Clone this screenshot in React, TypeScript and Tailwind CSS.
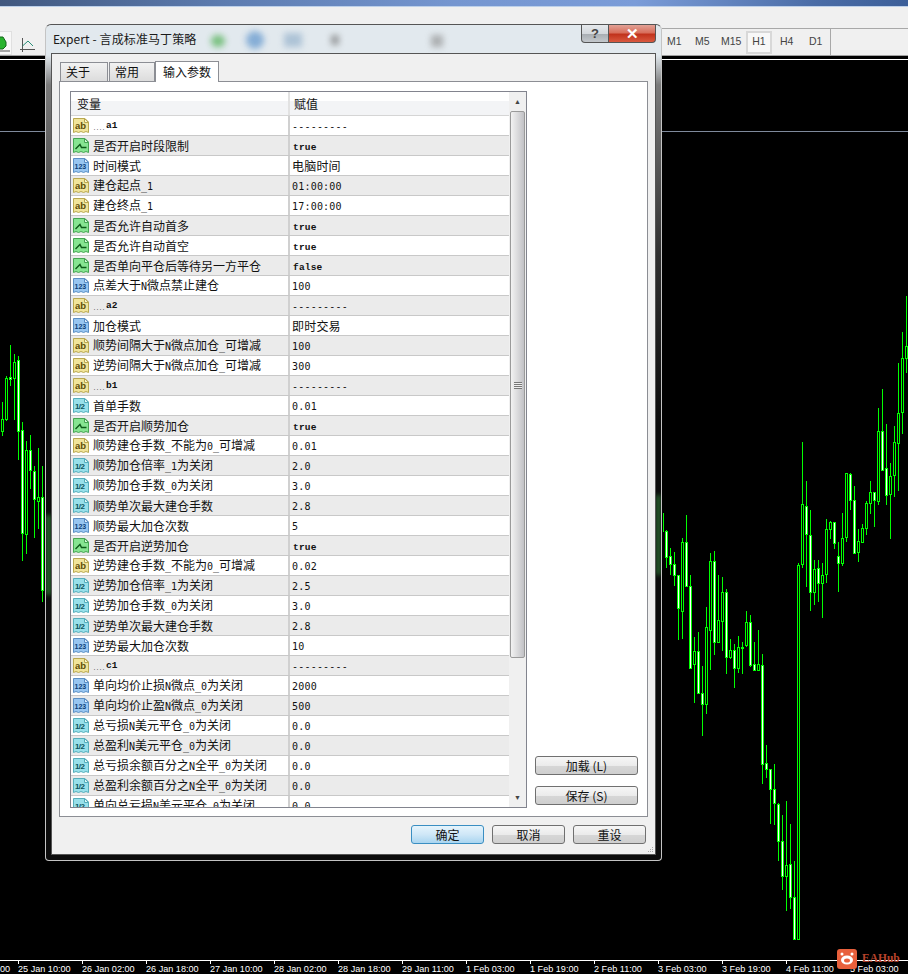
const cjk = { fontFamily: '"Noto Sans CJK SC", sans-serif' };
const mono = { fontFamily: '"DejaVu Sans Mono", monospace' };
const slab = { fontFamily: '"Liberation Mono", monospace' };
const tahoma = { fontFamily: '"Liberation Sans", sans-serif' };

type Kind = 'ab' | 'bool' | 'int' | 'half';

// [label, value, icon]
const rows: [string, string, Kind][] = [
  ['....a1', '---------', 'ab'],
  ['是否开启时段限制', 'true', 'bool'],
  ['时间模式', '电脑时间', 'int'],
  ['建仓起点_1', '01:00:00', 'ab'],
  ['建仓终点_1', '17:00:00', 'ab'],
  ['是否允许自动首多', 'true', 'bool'],
  ['是否允许自动首空', 'true', 'bool'],
  ['是否单向平仓后等待另一方平仓', 'false', 'bool'],
  ['点差大于N微点禁止建仓', '100', 'int'],
  ['....a2', '---------', 'ab'],
  ['加仓模式', '即时交易', 'int'],
  ['顺势间隔大于N微点加仓_可增减', '100', 'ab'],
  ['逆势间隔大于N微点加仓_可增减', '300', 'ab'],
  ['....b1', '---------', 'ab'],
  ['首单手数', '0.01', 'half'],
  ['是否开启顺势加仓', 'true', 'bool'],
  ['顺势建仓手数_不能为0_可增减', '0.01', 'ab'],
  ['顺势加仓倍率_1为关闭', '2.0', 'half'],
  ['顺势加仓手数_0为关闭', '3.0', 'half'],
  ['顺势单次最大建仓手数', '2.8', 'half'],
  ['顺势最大加仓次数', '5', 'int'],
  ['是否开启逆势加仓', 'true', 'bool'],
  ['逆势建仓手数_不能为0_可增减', '0.02', 'ab'],
  ['逆势加仓倍率_1为关闭', '2.5', 'half'],
  ['逆势加仓手数_0为关闭', '3.0', 'half'],
  ['逆势单次最大建仓手数', '2.8', 'half'],
  ['逆势最大加仓次数', '10', 'int'],
  ['....c1', '---------', 'ab'],
  ['单向均价止损N微点_0为关闭', '2000', 'int'],
  ['单向均价止盈N微点_0为关闭', '500', 'int'],
  ['总亏损N美元平仓_0为关闭', '0.0', 'half'],
  ['总盈利N美元平仓_0为关闭', '0.0', 'half'],
  ['总亏损余额百分之N全平_0为关闭', '0.0', 'half'],
  ['总盈利余额百分之N全平_0为关闭', '0.0', 'half'],
  ['单向总亏损N美元平仓_0为关闭', '0.0', 'half'],
];

// x, wick top, wick bottom, body top, body bottom, white body
const candles: [number, number, number, number, number, boolean][] = [
  [2.5, 402, 436, 419, 431, false], [6.5, 376, 421, 378, 419, false], [10.5, 345, 386, 377, 379, true],
  [14.5, 354, 420, 362, 378, false], [18.5, 356, 460, 360, 431, true], [22.5, 422, 561, 430, 533, true],
  [26.5, 441, 554, 450, 534, false], [30.5, 435, 489, 450, 470, true], [34.5, 466, 538, 471, 499, true],
  [38.5, 448, 529, 497, 501, false], [42.5, 466, 602, 497, 590, true],
  [666.5, 530, 568, 531, 557, true], [670.5, 548, 575, 556, 564, true], [674.5, 552, 586, 564, 575, true],
  [678.5, 575, 640, 575, 608, true], [682.5, 538, 639, 542, 611, false], [686.5, 515, 586, 542, 586, true],
  [690.5, 575, 668, 586, 668, true], [694.5, 637, 703, 651, 664, false], [698.5, 632, 693, 651, 693, true],
  [702.5, 666, 736, 693, 704, true], [706.5, 607, 714, 627, 704, false], [710.5, 553, 670, 561, 630, false],
  [714.5, 551, 655, 561, 642, true], [718.5, 575, 642, 620, 642, false], [722.5, 577, 651, 592, 621, false],
  [726.5, 589, 674, 592, 657, true], [730.5, 639, 659, 650, 657, false], [734.5, 644, 688, 650, 668, true],
  [738.5, 636, 673, 647, 668, false], [742.5, 642, 674, 647, 648, false], [746.5, 611, 647, 622, 645, false],
  [750.5, 615, 667, 622, 665, true], [754.5, 642, 670, 664, 670, true], [758.5, 630, 671, 664, 670, false],
  [762.5, 654, 784, 665, 764, true], [766.5, 745, 778, 763, 769, true], [770.5, 769, 824, 769, 789, true],
  [774.5, 764, 825, 789, 803, true], [778.5, 803, 861, 804, 841, true], [782.5, 815, 890, 841, 876, true],
  [786.5, 801, 911, 865, 876, false], [790.5, 824, 909, 864, 897, true], [794.5, 861, 939, 897, 939, true],
  [798.5, 563, 939, 565, 939, false], [802.5, 442, 568, 504, 564, false], [806.5, 481, 587, 506, 534, true],
  [810.5, 510, 611, 535, 592, true], [814.5, 560, 605, 569, 592, false], [818.5, 560, 602, 568, 583, true],
  [822.5, 563, 618, 575, 583, false], [826.5, 519, 583, 529, 574, false], [830.5, 521, 539, 522, 529, false],
  [834.5, 522, 549, 522, 543, true], [838.5, 542, 592, 556, 563, true], [842.5, 513, 566, 538, 563, false],
  [846.5, 473, 542, 473, 537, false], [850.5, 473, 510, 474, 500, true], [854.5, 486, 554, 500, 553, true],
  [858.5, 529, 562, 541, 552, false], [862.5, 524, 543, 528, 542, false], [866.5, 501, 535, 503, 528, false],
  [870.5, 481, 514, 492, 503, false], [874.5, 492, 527, 492, 500, true], [878.5, 408, 505, 431, 501, false],
  [882.5, 389, 470, 431, 470, true], [886.5, 424, 505, 468, 495, true], [890.5, 463, 539, 476, 494, false],
  [894.5, 426, 497, 442, 475, false], [898.5, 363, 491, 413, 443, false], [902.5, 332, 434, 358, 412, false],
  [906.5, 296, 373, 346, 358, false],
];

const axisLabels = [
  '25 Jan 10:00', '26 Jan 02:00', '26 Jan 18:00', '27 Jan 10:00', '28 Jan 02:00', '28 Jan 18:00',
  '29 Jan 11:00', '1 Feb 03:00', '1 Feb 19:00', '2 Feb 11:00', '3 Feb 03:00', '3 Feb 19:00', '4 Feb 11:00', '5 Feb 03:00',
];

const iconColors: Record<Kind, { fill: string; fold: string; line: string; ink: string }> = {
  ab: { fill: '#f1e49a', fold: '#fbf5cf', line: '#b9a850', ink: '#5c4d08' },
  bool: { fill: '#86e491', fold: '#d5f7d8', line: '#45a552', ink: '#0c5a18' },
  int: { fill: '#98c6f1', fold: '#dbeafb', line: '#5b8fc4', ink: '#0d3f78' },
  half: { fill: '#98e0ea', fold: '#dcf6f9', line: '#55aebb', ink: '#0c5560' },
};

function FileIcon({ kind }: { kind: Kind }) {
  const c = iconColors[kind];
  return (
    <svg width="17" height="17" viewBox="0 0 17 17" className="shrink-0">
      <path d="M0.5 1.5H12L15.5 5V15.5L13 14.5L10.5 15.5L8 14.5L5.5 15.5L3 14.5L0.5 15.5Z" fill={c.fill} stroke={c.line} />
      <path d="M11.5 1.5V5.5H15.5Z" fill={c.fold} stroke={c.line} />
      {kind === 'bool' && <path d="M2.5 12L7 7.5L8.5 10.5H13.5" fill="none" stroke={c.ink} strokeWidth="1.4" />}
      {kind === 'ab' && <text x="2" y="11.5" fontSize="9.5" fontWeight="700" fill={c.ink} fontFamily="Liberation Sans">ab</text>}
      {kind === 'int' && <text x="1.5" y="11.5" fontSize="7" fontWeight="700" fill={c.ink} fontFamily="Liberation Sans">123</text>}
      {kind === 'half' && <text x="2" y="11.5" fontSize="8" fontWeight="700" letterSpacing="-0.6" fill={c.ink} fontFamily="Liberation Sans">1/2</text>}
    </svg>
  );
}

// latin goes half width next to the 12px chinese, as in the original bitmap font
function Mixed({ text, small }: { text: string; small?: boolean }) {
  if (text.startsWith('....')) {
    return (
      <>
        <span className="mr-[1px] text-[5px]" style={mono}>....</span>
        <span className="relative bottom-[2px] text-[9.5px] font-bold" style={slab}>{text.slice(4)}</span>
      </>
    );
  }
  return (
    <>
      {text.split(/([A-Za-z0-9_.:-]+)/).map((part, i) =>
        /^[A-Za-z0-9_.:-]+$/.test(part) ? (
          <span key={i} className={small ? 'text-[9.5px] font-bold' : 'text-[10px]'} style={small ? slab : mono}>{part}</span>
        ) : (
          <span key={i}>{part}</span>
        ),
      )}
    </>
  );
}

function Row({ label, value, kind, grey }: { label: string; value: string; kind: Kind; grey: boolean }) {
  const small = value === 'true' || value === 'false';
  return (
    <div className={`flex h-5 shrink-0 border-b border-[#c8c8c8] ${grey ? 'bg-[#ebebeb]' : 'bg-white'}`}>
      <div className="flex w-[217px] shrink-0 items-center gap-[3px] pl-[2px] text-[12px] leading-none text-[#111]" style={cjk}>
        <FileIcon kind={kind} />
        <span className="whitespace-nowrap"><Mixed text={label} /></span>
      </div>
      <div className={`flex flex-1 items-center border-l-2 border-[#d0d0d0] leading-none text-[#111] text-[12px] ${small ? 'pl-[3px]' : 'pl-[2px]'}`} style={cjk}>
        <span className="whitespace-nowrap tracking-[0.2px]"><Mixed text={value} small={small} /></span>
      </div>
    </div>
  );
}

function Btn({ children, main }: { children: React.ReactNode; main?: boolean }) {
  return (
    <button
      className={`flex h-[19px] items-center justify-center rounded-[3px] border text-[12px] leading-none text-[#111] ${
        main
          ? 'w-[73px] border-[#3a8ec2] bg-[linear-gradient(to_bottom,#e6f4fc_0%,#cfe7f7_50%,#a9d5f0_100%)]'
          : 'border-[#707070] bg-[linear-gradient(to_bottom,#f6f6f6_0%,#ebebeb_50%,#d6d6d6_55%,#cfcfcf_100%)]'
      }`}
      style={cjk}
    >
      {children}
    </button>
  );
}

function Chart() {
  return (
    <svg width="908" height="900" viewBox="0 60 908 900" className="absolute left-0 top-0">
      <line x1="0" x2="908" y1="131.5" y2="131.5" stroke="#7f8a9c" />
      {candles.map(([x, hi, lo, top, bot, white]) => (
        <g key={x}>
          <line x1={x} x2={x} y1={hi} y2={lo} stroke="#00ff00" />
          <rect x={x - 1} y={top + 0.5} width="2" height={Math.max(bot - top, 1)} fill={white ? '#ffffff' : '#000000'} stroke="#00ff00" />
        </g>
      ))}
      <line x1="663.5" x2="663.5" y1="513" y2="532" stroke="#00ff00" />
    </svg>
  );
}

function Toolbar() {
  return (
    <div className="relative h-[49px] shrink-0 bg-[#f0f0f0]">
      <div className="absolute left-0 top-[24px] flex h-[24px] w-[12px] items-center border border-l-0 border-[#e0e0e0] bg-[#f8f8f8]">
        <svg width="11" height="18" viewBox="0 0 11 18">
          <path d="M-3 3H3L6 8V12L3 15H-3" fill="#29b32e" stroke="#14661a" />
          <path d="M0 17H10" stroke="#555" />
        </svg>
      </div>
      <svg width="16" height="16" viewBox="0 0 16 16" className="absolute left-[20px] top-[30px]">
        <path d="M2.5 1V15M0 12.5H15" stroke="#555" fill="none" />
        <path d="M2.5 9L8 4L13 9" stroke="#2a8f78" fill="none" />
      </svg>
      <div className="absolute right-0 top-[21px] flex h-[27px] w-[246px] items-center border-t border-[#a8a8a8] text-[10.5px] text-[#444]" style={tahoma}>
        <span className="ml-[5px] w-[28px]">M1</span>
        <span className="w-[26px]">M5</span>
        <span className="w-[25px]">M15</span>
        <span className="flex h-[23px] w-[26px] items-center justify-center border-2 border-[#d8d8d8] bg-[#f8f8f8]">H1</span>
        <span className="ml-[8px] w-[29px]">H4</span>
        <span className="w-[21px]">D1</span>
        <span className="h-full w-px bg-[#a8a8a8]" />
      </div>
      <div className="absolute bottom-0 left-0 h-px w-full bg-[#a0a0a0]" />
    </div>
  );
}

function Axis() {
  return (
    <div className="flex h-[14px] shrink-0 overflow-hidden border-t border-white">
      <span className="mt-[3px] w-[18px] shrink-0 whitespace-nowrap text-[9.1px] leading-[10px] text-white" style={tahoma}>00</span>
      {axisLabels.map(t => (
        <div key={t} className="flex w-16 shrink-0 flex-col">
          <div className="h-[3px] w-px bg-white" />
          <span className="whitespace-nowrap text-[9.1px] leading-[10px] text-white" style={tahoma}>{t}</span>
        </div>
      ))}
    </div>
  );
}

function Dialog() {
  return (
    <div className="absolute left-[45px] top-[24px] flex h-[837px] w-[617px] flex-col overflow-hidden rounded-t-[6px] rounded-b-[4px] border border-[#c4c4c4] border-t-[#555] bg-[linear-gradient(to_bottom,#e2e9ee_0px,#e2e9ee_30px,#7a7a7a_60px,#303030_230px,#0c0c0c_400px,#0c0c0c_100%)] px-[5px] pb-[5px] pt-[28px]">
      {/* toolbar blurred through the glass */}
      <div className="absolute left-[165px] top-[10px] h-[12px] w-[14px] rounded-full bg-[#4caf50] opacity-70 blur-[3px]" />
      <div className="absolute left-[200px] top-[6px] h-[18px] w-[18px] rounded-full bg-[#6f9fd0] opacity-80 blur-[3px]" />
      <div className="absolute left-[238px] top-[8px] h-[14px] w-[18px] bg-[#97b3cc] opacity-70 blur-[3px]" />
      <div className="absolute left-[285px] top-[10px] h-[10px] w-[8px] bg-[#666] opacity-60 blur-[3px]" />
      <div className="absolute left-[385px] top-[10px] h-[12px] w-[12px] bg-[#888] opacity-60 blur-[3px]" />
      <div className="absolute left-0 top-[490px] h-[80px] w-[5px] bg-[#3fae4a] opacity-60 blur-[2px]" />
      <div className="absolute right-0 top-[470px] h-[80px] w-[5px] bg-[#3fae4a] opacity-50 blur-[2px]" />

      <div className="absolute left-[7px] top-[5px] text-[12px] leading-[18px] tracking-[0.12px] text-[#1a1a1a]" style={cjk}>Expert - 言成标准马丁策略</div>
      <div className="absolute right-[5px] top-0 flex h-[18px]">
        <div className="flex w-[28px] items-center justify-center rounded-bl-[4px] border border-t-0 border-[#555] bg-[linear-gradient(to_bottom,#e6e9ec_0%,#d4d8dc_50%,#a9aeb3_55%,#c4c8cc_100%)] text-[13px] font-bold leading-none text-[#444]" style={tahoma}>?</div>
        <div className="flex w-[47px] items-center justify-center rounded-br-[4px] border border-l-0 border-t-0 border-[#555] bg-[linear-gradient(to_bottom,#e2a196_0%,#d86f5c_45%,#c1331d_55%,#d9593f_100%)] text-[15px] font-bold leading-none text-white" style={tahoma}>✕</div>
      </div>

      <div className="relative flex min-h-0 flex-1 flex-col border border-[#555] bg-[#f0f0f0] px-[7px]">
        <div className="flex h-[27px] shrink-0 items-end pl-[1px] text-[12px] leading-none text-[#111]" style={cjk}>
          <div className="flex h-[19px] w-[48px] items-center border border-b-0 border-[#8c8e94] bg-[linear-gradient(to_bottom,#f2f2f2,#dcdcdc)] pl-[5px]">关于</div>
          <div className="ml-[1px] flex h-[19px] w-[46px] items-center border border-b-0 border-[#8c8e94] bg-[linear-gradient(to_bottom,#f2f2f2,#dcdcdc)] pl-[5px]">常用</div>
          <div className="relative z-10 mb-[-1px] flex h-[21px] w-[64px] items-center justify-center border border-b-0 border-[#8c8e94] bg-white">输入参数</div>
        </div>
        <div className="flex h-[736px] shrink-0 border border-[#8c8e94] bg-white pl-[10px] pt-[9px]">
          <div className="flex h-[717px] w-[457px] shrink-0 border border-[#82848e] bg-white">
            <div className="flex min-w-0 flex-1 flex-col overflow-hidden">
              <div className="flex h-[24px] shrink-0 border-b border-[#d5d5d5] bg-[linear-gradient(to_bottom,#ffffff_0%,#ffffff_38%,#f3f4f6_40%,#f3f4f6_100%)] text-[12px] leading-none text-[#111]" style={cjk}>
                <div className="flex w-[217px] shrink-0 items-center pl-[6px]">变量</div>
                <div className="flex flex-1 items-center border-l-2 border-[#e2e2e2] pl-[4px]">赋值</div>
              </div>
              {rows.map(([label, value, kind], i) => (
                <Row key={label + i} label={label} value={value} kind={kind} grey={i % 2 === 1} />
              ))}
            </div>
            <div className="flex w-[17px] shrink-0 flex-col bg-[#f0f0f0]">
              <div className="flex h-[19px] shrink-0 items-center justify-center text-[7px] leading-none text-[#444]" style={tahoma}>▲</div>
              <div className="relative mx-px h-[547px] shrink-0 rounded-[2px] border border-[#9a9a9a] bg-[linear-gradient(to_right,#f2f2f2,#d8d8da_55%,#c2c2c6)]">
                <div className="absolute left-[3px] top-[270px] h-[7px] w-[8px] bg-[repeating-linear-gradient(to_bottom,#777_0px,#777_1px,#eee_1px,#eee_2px)]" />
              </div>
              <div className="flex-1" />
              <div className="flex h-[19px] shrink-0 items-center justify-center text-[7px] leading-none text-[#444]" style={tahoma}>▼</div>
            </div>
          </div>
          <div className="ml-[8px] flex w-[103px] shrink-0 flex-col gap-[11px] pt-[665px]">
            <Btn>加载 (L)</Btn>
            <Btn>保存 (S)</Btn>
          </div>
        </div>
        <div className="flex flex-1 justify-end gap-[8px] pr-[2px] pt-[8px]">
          <Btn main>确定</Btn>
          <div className="w-[73px]"><div className="flex flex-col"><Btn>取消</Btn></div></div>
          <div className="w-[73px]"><div className="flex flex-col"><Btn>重设</Btn></div></div>
        </div>
        {/* size grip */}
        <div className="absolute bottom-[2px] right-[2px] grid grid-cols-3 gap-px">
          <span className="col-start-3 h-px w-px bg-[#aaa]" />
          <span className="col-start-2 h-px w-px bg-[#aaa]" />
          <span className="h-px w-px bg-[#aaa]" />
          <span className="h-px w-px bg-[#aaa]" />
          <span className="h-px w-px bg-[#aaa]" />
          <span className="h-px w-px bg-[#aaa]" />
        </div>
      </div>
    </div>
  );
}

export default function App() {
  return (
    <div className="relative flex h-[974px] w-[908px] flex-col overflow-hidden bg-black">
      <div className="h-[7px] shrink-0 border-b border-[#bcd0ea] bg-[linear-gradient(to_right,#41587f_0%,#5d7cb0_25%,#7596d0_50%,#7b9cd8_70%,#4a6ca6_90%,#3c5f99_100%)]" />
      <Toolbar />
      <div className="h-[3px] shrink-0 bg-black" />
      <div className="h-px shrink-0 bg-white" />
      <div className="relative h-[900px] shrink-0">
        <Chart />
      </div>
      <Axis />
      <Dialog />
      {/* EAHub watermark */}
      <div className="absolute left-[837px] top-[949px] flex items-center gap-[5px]">
        <div className="flex h-[20px] w-[20px] items-center justify-center rounded-[3px] bg-[#e8603c]">
          <svg width="16" height="14" viewBox="0 0 16 14">
            <circle cx="3" cy="2" r="1.5" fill="#fff" />
            <circle cx="13" cy="2" r="1.5" fill="#fff" />
            <ellipse cx="8" cy="8" rx="6" ry="4.5" fill="#fff" />
            <ellipse cx="8" cy="8.5" rx="3" ry="2" fill="#e8603c" />
          </svg>
        </div>
        <span className="text-[11.5px] font-bold leading-none text-[#b8432b]" style={{ fontFamily: '"Liberation Serif", serif' }}>EAHub</span>
      </div>
    </div>
  );
}
